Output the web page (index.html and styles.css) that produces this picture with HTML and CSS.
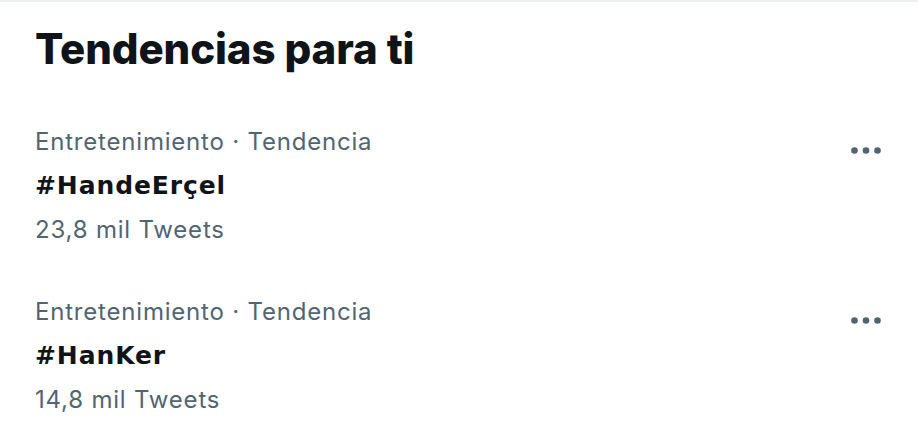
FILE: index.html
```html
<!DOCTYPE html>
<html lang="es">
<head>
<meta charset="utf-8">
<link rel="stylesheet" href="styles.css">
</head>
<body>
<main class="panel">
  <h2 class="panel-title">Tendencias para ti</h2>
  <section class="trend">
    <div class="trend-body">
      <div class="trend-meta">Entretenimiento · Tendencia</div>
      <div class="trend-tag">#HandeErçel</div>
      <div class="trend-count">23,8 mil Tweets</div>
    </div>
    <svg class="trend-more" width="31" height="7" viewBox="0 0 31 7" aria-hidden="true">
      <circle cx="3.5" cy="3.5" r="3.3"/><circle cx="15" cy="3.5" r="3.3"/><circle cx="26.5" cy="3.5" r="3.3"/>
    </svg>
  </section>
  <section class="trend">
    <div class="trend-body">
      <div class="trend-meta">Entretenimiento · Tendencia</div>
      <div class="trend-tag">#HanKer</div>
      <div class="trend-count">14,8 mil Tweets</div>
    </div>
    <svg class="trend-more" width="31" height="7" viewBox="0 0 31 7" aria-hidden="true">
      <circle cx="3.5" cy="3.5" r="3.3"/><circle cx="15" cy="3.5" r="3.3"/><circle cx="26.5" cy="3.5" r="3.3"/>
    </svg>
  </section>
</main>
</body>
</html>
```
FILE: styles.css
```css
* { box-sizing: border-box; }
html, body { margin: 0; padding: 0; background: #ffffff; }
body {
  width: 918px;
  height: 447px;
  overflow: hidden;
  font-family: Inter, "Noto Sans", sans-serif;
  color: #0f1419;
}
.panel {
  border-top: 2px solid #eef1f2;
  padding: 21px 36px 0 35px;
}
.panel-title {
  margin: 0 0 45px 0;
  font-size: 42px;
  line-height: 52px;
  font-weight: 800;
  letter-spacing: -0.1px;
}
.trend {
  display: flex;
  justify-content: space-between;
  align-items: flex-start;
  margin-bottom: 38px;
}
.trend-body {
  display: flex;
  flex-direction: column;
}
.trend-meta, .trend-count {
  font-size: 24px;
  line-height: 44px;
  letter-spacing: 0.8px;
  color: #536471;
}
.trend-tag {
  font-family: "DejaVu Sans", Inter, sans-serif;
  font-size: 25px;
  line-height: 44px;
  font-weight: 700;
  letter-spacing: 0.9px;
  color: #0f1419;
}
.trend-more {
  fill: #536471;
  margin-top: 27px;
}
```
